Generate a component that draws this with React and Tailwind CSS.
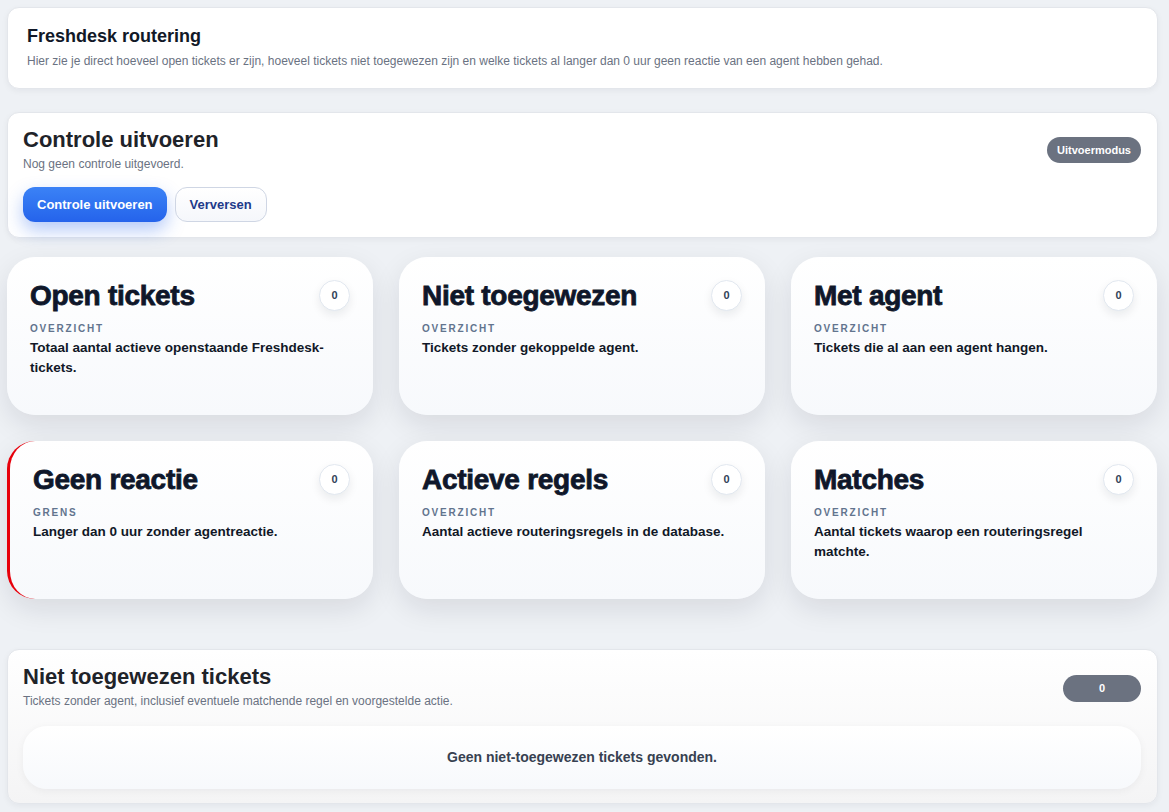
const stats = [
  { title: 'Open tickets', label: 'Overzicht', text: 'Totaal aantal actieve openstaande Freshdesk-tickets.', value: 0 },
  { title: 'Niet toegewezen', label: 'Overzicht', text: 'Tickets zonder gekoppelde agent.', value: 0 },
  { title: 'Met agent', label: 'Overzicht', text: 'Tickets die al aan een agent hangen.', value: 0 },
  { title: 'Geen reactie', label: 'Grens', text: 'Langer dan 0 uur zonder agentreactie.', value: 0, alert: true },
  { title: 'Actieve regels', label: 'Overzicht', text: 'Aantal actieve routeringsregels in de database.', value: 0 },
  { title: 'Matches', label: 'Overzicht', text: 'Aantal tickets waarop een routeringsregel matchte.', value: 0 },
];

const StatCard = ({ title, label, text, value, alert }) => (
  <div
    className={`h-[158px] rounded-[28px] bg-gradient-to-b from-white to-[#f7f9fc] shadow-[0_10px_28px_rgba(15,23,42,0.10)] pt-[22px] pr-[23px] pl-[23px] ${
      alert ? 'border-l-[3px] border-red-600' : ''
    }`}
  >
    <div className="flex items-start justify-between">
      <h2 className="text-[28px] leading-[34px] font-extrabold tracking-[-0.01em] [-webkit-text-stroke:0.8px_#0f172a] text-[#0f172a]">{title}</h2>
      <span className="mt-[1px] w-[31px] h-[31px] rounded-full bg-white border border-slate-200 shadow-[0_4px_10px_rgba(15,23,42,0.08)] flex items-center justify-center text-[11px] font-bold text-slate-700">
        {value}
      </span>
    </div>
    <div className="mt-[8px] text-[10px] font-bold uppercase tracking-[0.18em] text-slate-500">{label}</div>
    <p className="mt-[2px] text-[13.5px] leading-[20px] font-semibold text-[#111827]">{text}</p>
  </div>
);

export default function App() {
  return (
    <div className="min-h-screen bg-[#eef1f5] pl-[7px] pr-[11px] pt-[7px] pb-[10px] font-['Liberation_Sans',Arial,sans-serif]">

      {/* Intro */}
      <div className="h-[82px] rounded-[12px] bg-white border border-[#e3e6eb] shadow-[0_2px_6px_rgba(15,23,42,0.05)] px-[19px] pt-[17px]">
        <h1 className="text-[18px] leading-[22px] font-bold text-[#111827]">Freshdesk routering</h1>
        <p className="mt-[5px] text-[12px] text-gray-500">
          Hier zie je direct hoeveel open tickets er zijn, hoeveel tickets niet toegewezen zijn en welke tickets al langer dan 0 uur geen reactie van een agent hebben gehad.
        </p>
      </div>

      {/* Controle */}
      <div className="mt-[23px] h-[126px] rounded-[12px] bg-white border border-[#e3e6eb] shadow-[0_2px_6px_rgba(15,23,42,0.05)] pl-[15px] pr-[16px] pt-[13px] flex justify-between">
        <div>
          <h2 className="text-[22px] leading-[28px] font-bold text-[#1f2329]">Controle uitvoeren</h2>
          <p className="mt-[1px] text-[12px] text-gray-500">Nog geen controle uitgevoerd.</p>
          <div className="mt-[14px] flex gap-[8px]">
            <button className="h-[35px] px-[14px] rounded-[12px] bg-gradient-to-b from-[#3b82f6] to-[#2563eb] text-white text-[13px] font-bold shadow-[0_8px_18px_rgba(37,99,235,0.35)]">
              Controle uitvoeren
            </button>
            <button className="h-[35px] px-[14px] rounded-[12px] bg-gradient-to-b from-white to-[#f5f7fb] border border-[#cfd6e4] text-[#1e3a8a] text-[13px] font-bold">
              Verversen
            </button>
          </div>
        </div>
        <div className="pt-[11px]">
          <span className="inline-flex h-[26px] items-center px-[10px] rounded-full bg-[#6b7280] text-white text-[11px] font-bold">Uitvoermodus</span>
        </div>
      </div>

      {/* Stats */}
      <div className="mt-[19px] grid grid-cols-3 gap-[26px] pr-[1px]">
        {stats.map((s) => (
          <StatCard key={s.title} {...s} />
        ))}
      </div>

      {/* Unassigned tickets */}
      <div className="mt-[50px] rounded-[12px] bg-gradient-to-b from-white to-[#f4f4f5] border border-[#e3e6eb] shadow-[0_2px_6px_rgba(15,23,42,0.05)] pl-[15px] pr-[16px] pt-[13px] pb-[14px]">
        <div className="flex justify-between">
          <div>
            <h2 className="text-[22px] leading-[28px] font-bold text-[#1f2329]">Niet toegewezen tickets</h2>
            <p className="mt-[1px] text-[12px] text-gray-500">Tickets zonder agent, inclusief eventuele matchende regel en voorgestelde actie.</p>
          </div>
          <div className="pt-[12px]">
            <span className="inline-flex h-[27px] w-[78px] items-center justify-center rounded-full bg-[#6b7280] text-white text-[11px] font-bold">0</span>
          </div>
        </div>
        <div className="mt-[16px] h-[63px] rounded-[24px] bg-gradient-to-b from-white to-[#f7f9fc] shadow-[0_2px_8px_rgba(15,23,42,0.05)] flex items-center justify-center">
          <p className="text-[14px] font-bold text-[#374151]">Geen niet-toegewezen tickets gevonden.</p>
        </div>
      </div>
    </div>
  );
}
